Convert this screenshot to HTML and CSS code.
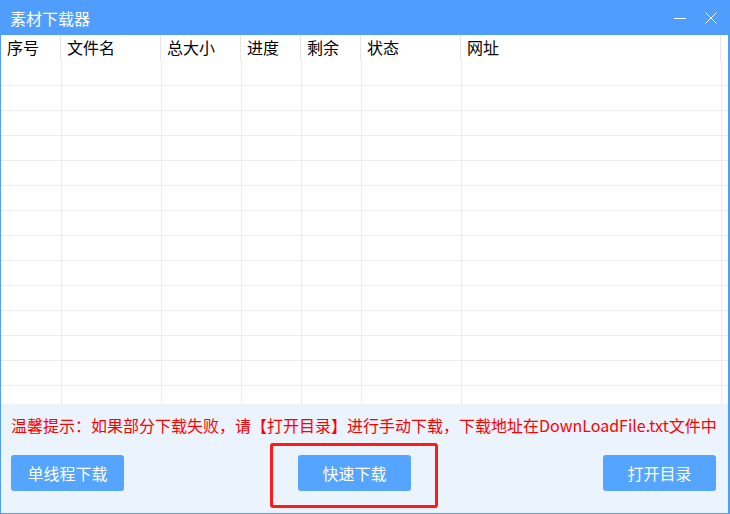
FILE: index.html
```html
<!DOCTYPE html>
<html lang="zh-CN">
<head>
  <meta charset="UTF-8" />
  <title>素材下载器</title>
  <link rel="stylesheet" href="styles.css">
</head>
<body>
  <div class="window">
    <div class="titlebar">
      <span class="title">素材下载器</span>
      <div class="win-btns">
        <svg class="icon" width="14" height="14" viewBox="0 0 14 14"><line x1="1" y1="7.5" x2="13" y2="7.5" stroke="#fff" stroke-width="1"/></svg>
        <svg class="icon" width="14" height="14" viewBox="0 0 14 14"><path d="M1.5 1.5 L12.5 12.5 M12.5 1.5 L1.5 12.5" stroke="#fff" stroke-width="1"/></svg>
      </div>
    </div>

    <div class="grid">
      <div class="grid-head">
        <div class="cell">序号</div>
        <div class="cell">文件名</div>
        <div class="cell">总大小</div>
        <div class="cell">进度</div>
        <div class="cell">剩余</div>
        <div class="cell">状态</div>
        <div class="cell">网址</div>
        <div class="cell last"></div>
      </div>
      <div id="rows"></div>
    </div>

    <div class="panel">
      <div class="tip">温馨提示：如果部分下载失败，请【打开目录】进行手动下载，下载地址在DownLoadFile.txt文件中</div>
      <div class="actions">
        <button class="btn">单线程下载</button>
        <div class="mark">
          <button class="btn">快速下载</button>
          <div class="mark-box"></div>
        </div>
        <button class="btn btn-right">打开目录</button>
      </div>
    </div>
  </div>

  <script>
    // empty rows for the download list
    const rows = document.getElementById('rows');
    for (let i = 0; i < 14; i++) {
      const row = document.createElement('div');
      row.className = 'grid-row';
      for (let c = 0; c < 8; c++) {
        const cell = document.createElement('div');
        cell.className = c === 7 ? 'cell last' : 'cell';
        row.appendChild(cell);
      }
      rows.appendChild(row);
    }
  </script>
</body>
</html>
```

FILE: styles.css
```css
body {
  margin: 0;
  font-family: "Noto Sans CJK SC", "Noto Sans", sans-serif;
  background: #fff;
}

.window {
  width: 730px;
  height: 514px;
  box-sizing: border-box;
  border: 1px solid #4f9efe;
  border-top: none;
  border-right-width: 2px;
  display: flex;
  flex-direction: column;
  overflow: hidden;
}

.titlebar {
  height: 35px;
  flex-shrink: 0;
  background: #4f9efe;
  margin: 0 -2px 0 -1px;
  display: flex;
  align-items: center;
  justify-content: space-between;
  padding: 0 12px 0 10px;
  color: #fff;
  border-top-right-radius: 3px;
}

.title {
  font-size: 16px;
  line-height: 20px;
}

.win-btns {
  display: flex;
  gap: 17px;
  margin-top: 1px;
}

.icon {
  display: block;
}

.grid {
  height: 369px;
  flex-shrink: 0;
  overflow: hidden;
  background: #fff;
}

.grid-head,
.grid-row {
  display: grid;
  grid-template-columns: 60px 100px 80px 60px 60px 100px 260px 1fr;
}

.grid-head {
  height: 26px;
  font-size: 16px;
  line-height: 25px;
  color: #000;
}

.grid-head .cell {
  padding-left: 6px;
  border-right: 1px solid #e6e6e6;
  white-space: nowrap;
  overflow: hidden;
}

.grid-row {
  height: 25px;
  box-sizing: border-box;
  padding-left: 1px;
  border-bottom: 1px solid #ececec;
}

.grid-row .cell {
  border-right: 1px solid #ececec;
}

.cell.last {
  border-right: none;
}

.panel {
  flex: 1;
  background: #ebf3fd;
  padding-top: 11px;
}

.tip {
  color: #ff0000;
  font-size: 16px;
  line-height: 20px;
  padding-left: 10px;
  white-space: nowrap;
}

.actions {
  display: flex;
  padding: 0 12px 0 10px;
  margin-top: 20px;
}

.btn {
  width: 113px;
  height: 36px;
  border: none;
  border-radius: 3px;
  background: #55a4fe;
  color: #fff;
  font-family: inherit;
  font-size: 16px;
  padding: 0;
}

.mark {
  position: relative;
  margin-left: 174px;
}

.mark-box {
  position: absolute;
  left: -28px;
  top: -12px;
  width: 168px;
  height: 65px;
  box-sizing: border-box;
  border: 3px solid #ff1a1a;
  border-radius: 3px;
}

.btn-right {
  margin-left: auto;
}
```
